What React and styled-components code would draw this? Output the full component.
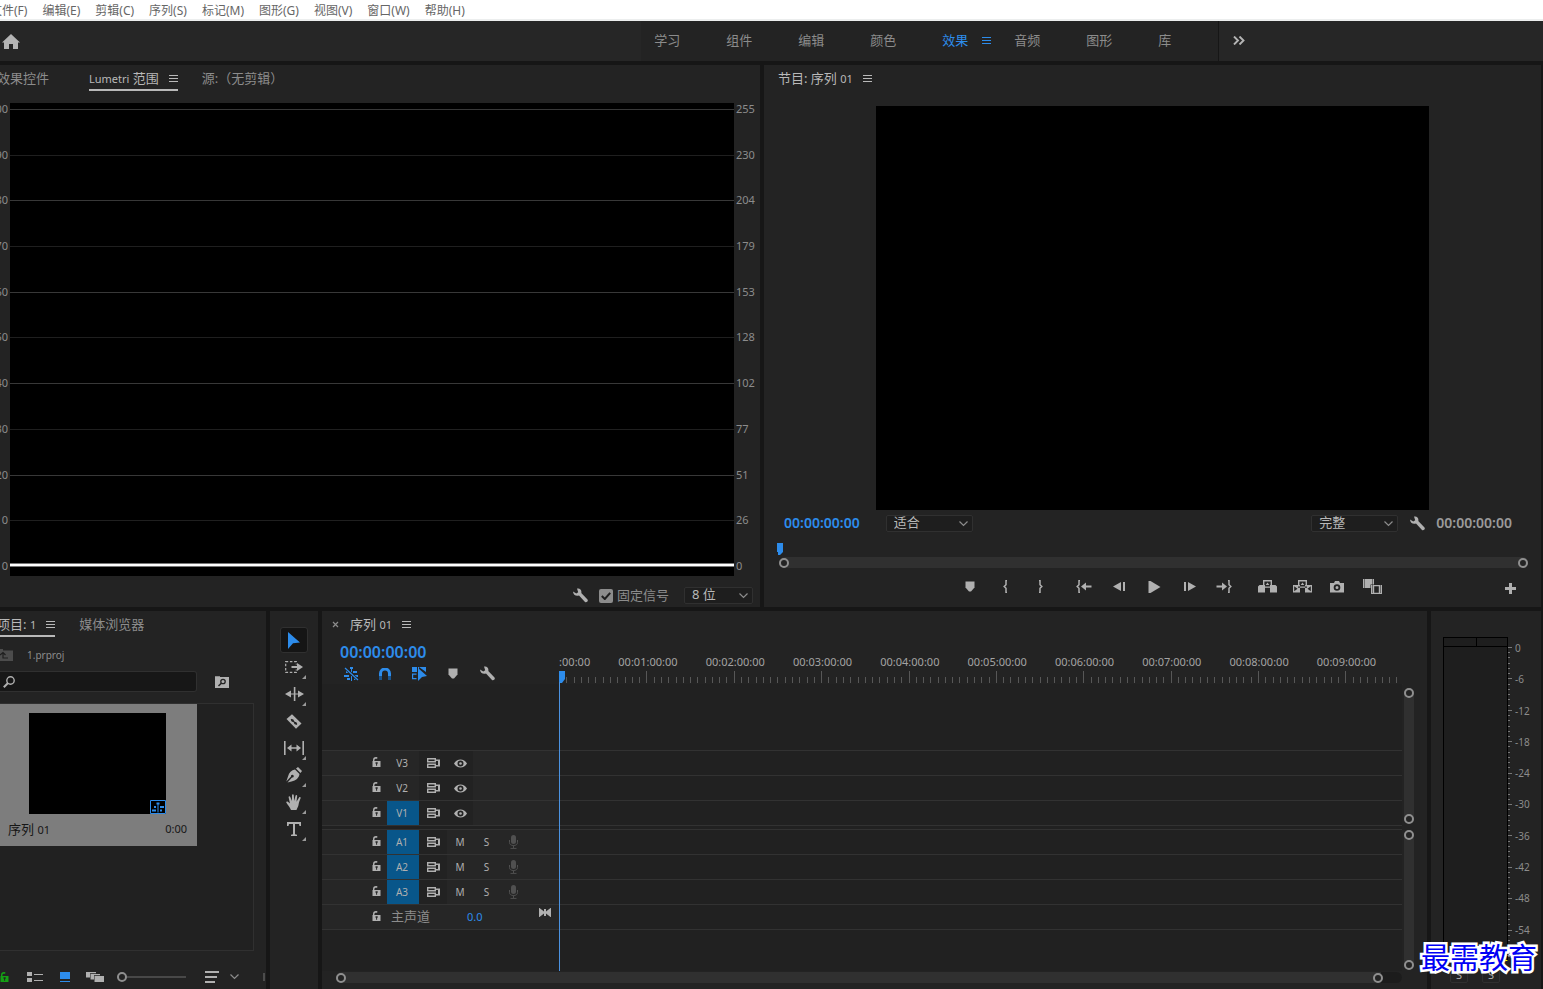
import React, { useState } from 'react'
import styled, { createGlobalStyle, css } from 'styled-components'

const GlobalStyle = createGlobalStyle`
    * {
        box-sizing: border-box;
    }
    body {
        margin: 0;
        background: #161616;
        color: #8c8c8c;
        font-family: 'Noto Sans', 'Noto Sans CJK SC', sans-serif;
        font-size: 13px;
        line-height: 16px;
    }
    button, input, select {
        font: inherit;
        color: inherit;
    }
    button {
        display: flex;
        align-items: center;
        justify-content: center;
        padding: 0;
        border: 0;
        background: none;
    }
    svg {
        display: block;
        flex: none;
    }
`

const Page = styled.div`
    display: flex;
    flex-direction: column;
    height: 100vh;
    overflow: hidden;
`

const MenuBar = styled.nav`
    display: flex;
    flex: none;
    gap: 15px;
    height: 21px;
    padding-top: 2px;
    margin-left: -10px;
    background: #fff;
    border-bottom: 2px solid #eceeee;
`

const MenuItem = styled.button`
    color: #666;
    font-size: 12px;
    white-space: nowrap;
`

const TopBar = styled.header`
    display: flex;
    flex: none;
    height: 40px;
    background: #262626;
`

const HomeArea = styled.div`
    display: flex;
    align-items: center;
    flex: 640;
    padding-left: 2px;
    color: #b4b4b4;
`

const Workspaces = styled.nav`
    display: flex;
    flex: none;
    padding: 0 0 2px 13px;
    background: #232323;
    border-right: 1px solid #161616;
`

const Workspace = styled.button`
    justify-content: flex-start;
    gap: 14px;
    width: 72px;
    color: ${p => (p.$active ? '#2d8ceb' : '#8c8c8c')};

    &:last-child {
        width: 60px;
    }
`

const MoreArea = styled.div`
    display: flex;
    flex: 310;
    padding: 0 0 2px 14px;
    color: #b4b4b4;
`

const Workbench = styled.main`
    display: flex;
    flex: 1;
    flex-direction: column;
    gap: 4px;
    min-height: 0;
    padding: 4px 2px 0 0;
`

const PanelRow = styled.div`
    display: flex;
    flex: ${p => p.$size} 1 0;
    gap: 4px;
    min-height: 0;
`

const Panel = styled.section`
    display: flex;
    flex-direction: column;
    flex: ${p => p.$flex || 'none'};
    width: ${p => p.$width || 'auto'};
    min-width: 0;
    min-height: 0;
    background: #232323;
    overflow: hidden;
`

const TabBar = styled.div`
    display: flex;
    align-items: flex-start;
    flex: none;
    gap: ${p => p.$gap || '23px'};
    height: ${p => p.$height};
    padding-left: ${p => p.$left || '0'};
    margin-left: ${p => p.$shift || '0'};
`

const Tab = styled.button`
    gap: ${p => p.$gap || '10px'};
    height: 26px;
    padding-top: ${p => (p.$active ? '3px' : '1px')};
    border-bottom: 2px solid ${p => (p.$underline ? '#b9b9b9' : 'transparent')};
    color: ${p => (p.$active ? '#b9b9b9' : '#8c8c8c')};
    white-space: nowrap;
`

const Latin = styled.span`
    font-size: 11px;
`

const Knob = styled.span`
    flex: none;
    width: 10px;
    height: 10px;
    border: 2px solid #8f8f8f;
    border-radius: 50%;
    background: #232323;
`

const SelectBox = styled.span`
    display: flex;
    position: relative;
    width: ${p => p.$width};
    color: #b9b9b9;

    select {
        appearance: none;
        width: 100%;
        height: 17px;
        padding: 0 0 2px 7px;
        border: 1px solid #303030;
        border-radius: 2px;
        background: #1e1e1e;
        line-height: 13px;
    }
    svg {
        position: absolute;
        right: 5px;
        top: 6px;
        pointer-events: none;
    }
`

const Timecode = styled.span`
    color: ${p => (p.$muted ? '#9a9a9a' : '#2d8ceb')};
    font-size: ${p => (p.$large ? '16px' : '14px')};
    font-weight: 600;
    line-height: 20px;
`

const WrenchButton = styled.button`
    margin: ${p => p.$margin || '0'};
    color: #b0b0b0;
`

// scopes

const Scope = styled.div`
    display: flex;
    flex: 1;
    min-height: 0;
`

const ScaleLabels = styled.div`
    display: flex;
    flex-direction: column;
    justify-content: space-between;
    align-items: ${p => (p.$left ? 'flex-end' : 'flex-start')};
    width: ${p => (p.$left ? '10px' : '26px')};
    padding: ${p => (p.$left ? '0 2px 4px 0' : '0 0 4px 2px')};
    font-size: 11px;
    line-height: 12px;
`

const Graph = styled.div`
    display: flex;
    flex: 1;
    flex-direction: column;
    justify-content: space-between;
    padding: 6px 0 9px;
    background: #000;
`

const GraphLine = styled.span`
    height: 1px;
    background: ${p => (p.$strong ? '#383838' : '#1f1f1f')};
    ${p => p.$trace && css`
        height: 4px;
        margin-top: -3px;
        background: #fff;
        border: solid #777;
        border-width: 1px 0;
    `}
`

const ScopeFooter = styled.div`
    display: flex;
    align-items: center;
    justify-content: flex-end;
    flex: none;
    height: 31px;
    padding: 8px 7px 0 0;
`

const CheckLabel = styled.label`
    display: flex;
    align-items: center;
    gap: 4px;
    margin: 0 15px 0 11px;

    input {
        appearance: none;
        width: 14px;
        height: 14px;
        margin: 0;
        border-radius: 2px;
        background: #8c8c8c;
    }
    svg {
        position: absolute;
        left: 2px;
        top: 3px;
        pointer-events: none;
    }
`

const CheckMark = styled.span`
    display: flex;
    position: relative;
`

const CheckText = styled.span`
    padding-bottom: 2px;
`

// program monitor

const Video = styled.div`
    flex: 1;
    margin: 0 112px;
    background: #000;
`

const MonitorInfo = styled.div`
    display: flex;
    align-items: center;
    gap: 26px;
    height: 26px;
    padding: 0 29px 0 20px;
`

const Grow = styled.span`
    flex: ${p => p.$size || 1} 1 0;
`

const Scrub = styled.div`
    padding: 7px 13px 0;
    color: #2d8ceb;
`

const ScrubTrack = styled.div`
    display: flex;
    align-items: center;
    justify-content: space-between;
    height: 11px;
    margin: 2px 0 0 2px;
    border-radius: 6px;
    background: #303030;
`

const Transport = styled.div`
    display: flex;
    align-items: center;
    height: 39px;
    padding-bottom: 2px;
`

const TransportGroup = styled.div`
    display: flex;
    margin-right: ${p => p.$gap || '0'};
    color: #b0b0b0;
`

const TransportButton = styled.button`
    width: 35px;
    height: 24px;
`

const AddArea = styled.div`
    display: flex;
    justify-content: flex-end;
    flex: 126 1 0;
    padding: 4px 25px 0 0;
    color: #b0b0b0;
`

// project

const PathRow = styled.div`
    display: flex;
    align-items: center;
    gap: 14px;
    height: 34px;
    padding-top: 2px;
    font-size: 10px;

    svg {
        color: #4c4c4c;
    }
`

const SearchRow = styled.div`
    display: flex;
    align-items: center;
    gap: 18px;
    color: #b0b0b0;
`

const SearchField = styled.label`
    display: flex;
    align-items: center;
    width: 197px;
    height: 21px;
    padding-left: 3px;
    border: 1px solid #303030;
    border-left: 0;
    border-radius: 0 3px 3px 0;
    background: #171717;

    input {
        flex: 1;
        min-width: 0;
        height: 16px;
        border: 0;
        background: none;
        outline: none;
    }
`

const Bin = styled.div`
    flex: 1;
    margin: 11px 12px 0 0;
    border: 1px solid #303030;
    border-left: 0;
    background: #212121;
`

const Clip = styled.article`
    width: 197px;
    padding: 9px 10px 8px 8px;
    background: #7d7d7d;
    color: #161616;
`

const Thumb = styled.div`
    display: flex;
    align-items: flex-end;
    justify-content: flex-end;
    height: 101px;
    margin: 0 21px 7px;
    background: #000;
    color: #2d8ceb;
`

const ClipInfo = styled.div`
    display: flex;
    justify-content: space-between;
`

const ProjectFooter = styled.div`
    display: flex;
    align-items: center;
    height: 38px;
    padding-top: 14px;
    color: #b0b0b0;
`

const FooterButton = styled.button`
    justify-content: ${p => p.$align || 'center'};
    width: ${p => p.$width};
    height: 16px;
    color: ${p => p.$color || '#b0b0b0'};
`

const FooterEdge = styled.span`
    width: 2px;
    height: 8px;
    margin-right: 1px;
    background: #4c4c4c;
`

const ZoomSlider = styled.input`
    appearance: none;
    width: 69px;
    height: 12px;
    margin: 0 16px 0 6px;
    background: linear-gradient(#484848, #484848) 0 5px / 100% 2px no-repeat;

    &::-webkit-slider-thumb {
        appearance: none;
        width: 10px;
        height: 10px;
        border: 2px solid #8f8f8f;
        border-radius: 50%;
        background: #232323;
    }
`

const Tools = styled.div`
    display: flex;
    flex-direction: column;
    align-items: center;
    gap: 1px;
    padding-top: 16px;
`

const Tool = styled.button`
    position: relative;
    width: 28px;
    height: 26px;
    border: 1px solid ${p => (p.$active ? '#303030' : 'transparent')};
    border-radius: 3px;
    background: ${p => (p.$active ? '#151515' : 'none')};
    color: ${p => (p.$active ? '#2d8ceb' : '#b0b0b0')};

    ${p => p.$more && css`
        &::after {
            content: '';
            position: absolute;
            right: 1px;
            bottom: 0;
            border: 2px solid transparent;
            border-right-color: #9a9a9a;
            border-bottom-color: #9a9a9a;
        }
    `}
`

// timeline

const TimelineHead = styled.div`
    display: grid;
    grid-template-columns: 237px 1fr;
    flex: none;
    height: 47px;
    padding-right: 24px;
`

const HeadControls = styled.div`
    padding: 5px 0 0 18px;
`

const HeadIcons = styled.div`
    display: flex;
    gap: 10px;
    margin-left: -1px;
`

const HeadButton = styled.button`
    width: 24px;
    height: 23px;
    color: ${p => (p.$on ? '#2d8ceb' : '#b0b0b0')};
`

const Ruler = styled.div`
    position: relative;
    display: flex;
    flex-direction: column;
    justify-content: flex-end;
    min-width: 0;
    overflow: hidden;
`

const RulerLabels = styled.div`
    display: flex;
    color: #a3a3a3;
    font-size: 11px;

    span {
        flex: 12 1 0;
        min-width: 0;
        text-indent: -28px;
        white-space: nowrap;
    }
    span:last-child {
        flex-grow: 8;
    }
`

const Ticks = styled.div`
    display: flex;
    align-items: flex-end;
    height: 15px;
    padding-bottom: 1px;
    border-bottom: 1px solid #262626;
`

const Tick = styled.span`
    flex: 1;
    height: ${p => (p.$major ? '12px' : '6px')};
    border-left: 1px solid #575757;
`

const PlayheadHandle = styled.svg`
    position: absolute;
    left: 0;
    bottom: 2px;
`

const TimelineBody = styled.div`
    display: flex;
    flex: 1;
    min-height: 0;
`

const TrackArea = styled.div`
    position: relative;
    display: flex;
    flex: 1;
    flex-direction: column;
    background: #212121;
`

const Playhead = styled.span`
    position: absolute;
    left: 237px;
    top: -2px;
    bottom: 0;
    width: 1px;
    background: #4b92e0;
`

const VideoTracks = styled.div`
    display: flex;
    flex: 1;
    flex-direction: column;
    justify-content: flex-end;
`

const TrackGap = styled.div`
    height: ${p => p.$height};
    border-top: 1px solid #323232;
`

const Track = styled.div`
    display: flex;
    height: 25px;
    border-top: 1px solid #323232;
`

const TrackHeader = styled.div`
    display: grid;
    grid-template-columns: 65px 32px 28px 26px 27px 27px 32px;
    width: 237px;
    background: #262626;
    color: #b0b0b0;
    font-size: 10px;
`

const TrackButton = styled.button`
    background: ${p => (p.$target ? '#08568a' : p.$dark ? '#222' : 'none')};
    ${p => p.$name && css`
        padding-right: 2px;
    `}
    ${p => p.$lock && css`
        justify-content: flex-end;
        padding: 0 6px 2px 0;
    `}
    ${p => p.$dim && css`
        color: #505050;
    `}
`

const MasterName = styled.span`
    grid-column: 2 / 4;
    padding: 3px 0 0 4px;
    color: #8c8c8c;
    font-size: 13px;
`

const MasterLevel = styled.span`
    grid-column: 4 / 6;
    padding: 4px 0 0 20px;
    color: #2d8ceb;
    font-size: 11px;
`

const MasterFit = styled.button`
    grid-column: 7;
    align-items: flex-start;
    justify-content: flex-start;
    padding: 3px 0 0 12px;
`

const ScrollColumn = styled.div`
    display: flex;
    flex-direction: column;
    gap: 6px;
    width: 25px;
    padding: 4px 13px 1px 2px;
`

const VerticalBar = styled.div`
    display: flex;
    flex-direction: column;
    justify-content: space-between;
    flex: ${p => p.$size} 1 0;
    border-radius: 5px;
    background: #303030;
`

const HorizontalBar = styled.div`
    display: flex;
    flex: none;
    align-items: center;
    justify-content: space-between;
    height: 11px;
    padding-right: 19px;
    margin: 1px 25px 6px 14px;
    border-radius: 6px;
    background: linear-gradient(90deg, #303030 0 98%, #1c1c1c 98%);
`

// audio meters

const Meter = styled.div`
    display: flex;
    flex: 1;
    min-height: 0;
    padding-left: 12px;
`

const MeterBox = styled.div`
    width: 65px;
    border: 1px solid #000;
    border-bottom-color: #ff0;
    background: #1e1e1e;
`

const MeterPeaks = styled.div`
    display: grid;
    grid-template-columns: 1fr 1fr;
    height: 9px;
    border-bottom: 1px solid #000;

    span + span {
        border-left: 1px solid #000;
    }
`

const MeterTicks = styled.div`
    display: flex;
    flex-direction: column;
    width: 4px;
    padding-top: 10px;

    span {
        flex: 1;
        width: 2px;
        border-top: 1px solid #777;
    }
    span:nth-child(6n + 1) {
        width: 4px;
    }
`

const MeterLabels = styled.div`
    display: flex;
    flex-direction: column;
    padding: 3px 0 8px 3px;
    font-size: 10px;

    span {
        flex: 1;
    }
`

const SoloRow = styled.div`
    display: flex;
    gap: 14px;
    height: 28px;
    padding: 4px 0 6px 19px;

    button {
        width: 18px;
        padding-top: 2px;
        border: 1px solid #303030;
        border-radius: 2px;
        color: #b0b0b0;
        font-size: 11px;
    }
`

const Watermark = styled.div`
    position: absolute;
    right: 6px;
    bottom: 15px;
    color: #0000f4;
    font-family: 'AR PL UKai CN', 'KaiTi', 'Noto Sans CJK SC', sans-serif;
    font-size: 29px;
    line-height: 36px;
    -webkit-text-stroke: 5px #fff;
    paint-order: stroke fill;
    pointer-events: none;
`

const Icon = ({ w, h, children }) => (
    <svg width={w} height={h} viewBox={`0 0 ${w} ${h}`} fill="currentColor" aria-hidden="true">
        {children}
    </svg>
)

const Burger = () => (
    <Icon w={9} h={9}>
        <path d="M0 1h9v1H0zM0 4h9v1H0zM0 7h9v1H0z" />
    </Icon>
)

const Chevron = () => (
    <Icon w={9} h={6}>
        <path d="M.5 .5l4 4 4-4" fill="none" stroke="#8c8c8c" strokeWidth="1.2" />
    </Icon>
)

const Wrench = () => (
    <Icon w={15} h={15}>
        <path d="M0 3.4l3.3 2.1 1.9-1.3L4 .6C6.6-.3 9 1.900 8.300 5L14.500 11.600c.6.8.3 1.700-.4 2.200-.6.600-1.500.700-2.100.1L6 7.500C3 8.500.1 6.800 0 3.400z" />
    </Icon>
)

const MarkerIcon = () => (
    <Icon w={10} h={11}>
        <path d="M.5.5h9v6L6 10.500H4L.5 6.500z" />
    </Icon>
)

const LockIcon = () => (
    <Icon w={9} h={10}>
        <path d="M1.700 4.500V3.200C1.700 1.700 2.500.800 4 .8l1.300.2" fill="none" stroke="currentColor" strokeWidth="1.400" />
        <path fillRule="evenodd" d="M.5 4h8v6h-8zM3.500 5.300v1.500h.6V8.700h1V6.800h.6V5.300z" />
    </Icon>
)

const SyncIcon = () => (
    <Icon w={13} h={10}>
        <path d="M.7.700h7.600v3H.7zM.7 6.300h7.600v3H.7z" fill="none" stroke="currentColor" strokeWidth="1.400" />
        <path d="M8 1.500h5v7H8V7h3V3H8z" />
    </Icon>
)

const EyeIcon = () => (
    <Icon w={13} h={9}>
        <path fillRule="evenodd" d="M0 4.500C3-.8 10-.8 13 4.500 10 9.800 3 9.800 0 4.500zM6.500 1.500a3 3 0 100 6 3 3 0 000-6z" />
        <circle cx="6.500" cy="4.500" r="1.300" />
    </Icon>
)

const MicIcon = () => (
    <Icon w={9} h={14}>
        <rect x="2" y="0" width="5" height="9" rx="2.500" />
        <path d="M.5 5v2.500c0 2 1.500 3 4 3s4-1 4-3V5M4.500 10.500V13M1.500 13.400h6" fill="none" stroke="currentColor" />
    </Icon>
)

const braceLeft = 'M4 .5H3v4.300L1.200 6.500 3 8.200v4.300h1'

const transportGroups = [
    {
        gap: '9px',
        items: [
            ['添加标记', <MarkerIcon />],
            ['标记入点', <Icon w={5} h={13}><path d={braceLeft} fill="none" stroke="currentColor" strokeWidth="1.500" /></Icon>],
            ['标记出点', <Icon w={5} h={13}><path d="M1 .5h1v4.300l1.800 1.700L2 8.200v4.300H1" fill="none" stroke="currentColor" strokeWidth="1.500" /></Icon>],
        ],
    },
    {
        gap: '8px',
        items: [
            ['转到入点', (
                <Icon w={16} h={13}>
                    <path d={braceLeft} fill="none" stroke="currentColor" strokeWidth="1.500" />
                    <path d="M5 6.500l5-4v3h5.500v2H10v3z" />
                </Icon>
            )],
            ['后退一帧', <Icon w={13} h={9}><path d="M0 4.500L8 0v9zM10 0h2v9h-2z" /></Icon>],
            ['播放', <Icon w={13} h={12}><path d="M.5 0h2L12.500 6l-10 6h-2z" /></Icon>],
            ['前进一帧', <Icon w={13} h={9}><path d="M13 4.500L5 0v9zM1 0h2v9H1z" /></Icon>],
            ['转到出点', (
                <Icon w={16} h={13}>
                    <path d="M12 .5h1v4.300l1.800 1.700L13 8.200v4.300h-1" fill="none" stroke="currentColor" strokeWidth="1.500" />
                    <path d="M11 6.500l-5-4v3H.5v2H6v3z" />
                </Icon>
            )],
        ],
    },
    {
        gap: '0',
        items: [
            ['提升', (
                <Icon w={19} h={13}>
                    <path d="M5.700 5.500V.700h7.600v4.800" fill="none" stroke="currentColor" strokeWidth="1.400" />
                    <path d="M0 6.500L1.500 5H7v7.500H0zM12 5h5.500L19 6.500v6h-7zM5 6.500h9v1.200H5zM9.500 2.500l1.800 2.500H7.700z" />
                </Icon>
            )],
            ['提取', (
                <Icon w={19} h={13}>
                    <path d="M5.700 5.500V.700h7.600v4.800" fill="none" stroke="currentColor" strokeWidth="1.400" />
                    <path fillRule="evenodd" d="M0 5h7v7.500H0zM1.200 6.200v5L4.500 8.700zM12 5h7v7.500h-7zM17.800 6.200v5l-3.300-2.500zM5 6.500h9v1.200H5zM9.500 2.500l1.800 2.500H7.700z" />
                </Icon>
            )],
            ['导出帧', (
                <Icon w={14} h={12}>
                    <path fillRule="evenodd" d="M0 2h4l1-2h4l1 2h4v9.500H0zM7 3.200a3.300 3.300 0 100 6.600 3.300 3.300 0 000-6.600zM7 5a1.500 1.500 0 110 3 1.500 1.500 0 010-3z" />
                </Icon>
            )],
            ['比较视图', (
                <Icon w={19} h={15}>
                    <path d="M0 0h11v9H0z" />
                    <path d="M1.500.5v9M9.500.5v9" stroke="#232323" strokeDasharray="1 1" />
                    <path d="M7.500 5.500H19V15H7.500z" fill="#232323" />
                    <path d="M8 6h4v1.200h-.8v6.600h.8V15H8zM15 6h4v9h-4v-1.200h.8V7.200H15zM11 6h5v1.200h-5zM11 13.800h5V15h-5z" />
                    <path d="M9.500 6.500v8M17.500 6.500v8" stroke="#232323" strokeDasharray="1 1" />
                </Icon>
            )],
        ],
    },
]

const tools = [
    ['选择工具', false, <Icon w={12} h={17}><path d="M0 0l12 10.500-7 .7L0 17z" /></Icon>],
    ['向前选择轨道工具', true, (
        <Icon w={18} h={12}>
            <path d="M.7.700h10.600v10.600H.700z" fill="none" stroke="currentColor" strokeWidth="1.200" strokeDasharray="2.500 1.700" />
            <path d="M6 3.500h12v5H6z" fill="#232323" />
            <path d="M6.500 5H12V2l6 4-6 4V7H6.500z" />
        </Icon>
    )],
    ['波纹编辑工具', true, <Icon w={19} h={14}><path d="M8.800 0h1.600v14H8.800zM0 7l6-3.500v3h7v-3L19 7l-6 3.500v-3H6v3z" /></Icon>],
    ['剃刀工具', false, (
        <Icon w={16} h={15}>
            <path d="M.5 5L6 .3 15.500 9.500 10 14.700z" />
            <path d="M5 5.200l6 5.300" stroke="#232323" strokeWidth="1.200" />
            <circle cx="6.500" cy="6.500" r="1.200" fill="#232323" />
            <circle cx="9.500" cy="9.200" r="1.200" fill="#232323" />
        </Icon>
    )],
    ['外滑工具', true, <Icon w={20} h={14}><path d="M0 0h1.600v14H0zM18.400 0H20v14h-1.600zM3 7l4.500-3.500v2.800h5V3.500L17 7l-4.500 3.500V7.700h-5v2.800z" /></Icon>],
    ['钢笔工具', true, (
        <Icon w={16} h={16}>
            <path d="M10 1.500L12 0l4 4-1.500 2zM9 2.500L13.500 7c-.5 4-3.500 6.500-8 7.500L1.500 15.500 6 10.500a1.400 1.400 0 10-1-1L.3 14.500 2 9.500C3 5.500 5.500 3 9 2.500z" />
        </Icon>
    )],
    ['手形工具', true, (
        <Icon w={16} h={16}>
            <path d="M5 16C4 13 1.500 11 .3 8.500c-.4-1 .8-1.500 1.600-.7L4 9.600 2.600 3.300c-.2-1.200 1.300-1.600 1.700-.4L5.900 7 6 1.300C6 0 7.700 0 7.800 1.300L8.200 7l1.300-5.300c.3-1.200 1.900-.9 1.700.4l-.7 5.600 2.600-4.200c.6-1 2-.3 1.500.8-1.300 3-1.600 4-2 6.200-.3 2-1.300 3.500-2.100 5.500z" />
        </Icon>
    )],
    ['文字工具', true, <Icon w={14} h={14}><path d="M0 0h14v4h-1.500L12 2H8v10.300l2 .4V14H4v-1.300l2-.4V2H2l-.5 2H0z" /></Icon>],
]

const menus = ['文件(F)', '编辑(E)', '剪辑(C)', '序列(S)', '标记(M)', '图形(G)', '视图(V)', '窗口(W)', '帮助(H)']
const workspaces = ['学习', '组件', '编辑', '颜色', '效果', '音频', '图形', '库']
const percentScale = [100, 90, 80, 70, 60, 50, 40, 30, 20, 10, 0]
const levelScale = [255, 230, 204, 179, 153, 128, 102, 77, 51, 26, 0]
const minutes = [0, 1, 2, 3, 4, 5, 6, 7, 8, 9]
const meterScale = [0, -6, -12, -18, -24, -30, -36, -42, -48, -54]

const ScopePanel = () => {
    const [clamp, setClamp] = useState(true)
    return (
        <Panel $flex="760 1 0">
            <TabBar $height="38px" $shift="-3px" $gap="0">
                <Tab>效果控件</Tab>
                <Grow $size={40} style={{ maxWidth: 40 }} />
                <Tab $active $underline $gap="10px">
                    <span><Latin>Lumetri</Latin> 范围</span>
                    <Burger />
                </Tab>
                <Grow $size={24} style={{ maxWidth: 24 }} />
                <Tab>源:（无剪辑）</Tab>
            </TabBar>
            <Scope>
                <ScaleLabels $left>{percentScale.map(n => <span key={n}>{n}</span>)}</ScaleLabels>
                <Graph>
                    {levelScale.map((n, i) => <GraphLine key={n} $strong={i % 2 === 0} $trace={n === 0} />)}
                </Graph>
                <ScaleLabels>{levelScale.map(n => <span key={n}>{n}</span>)}</ScaleLabels>
            </Scope>
            <ScopeFooter>
                <WrenchButton aria-label="设置"><Wrench /></WrenchButton>
                <CheckLabel>
                    <CheckMark>
                        <input type="checkbox" checked={clamp} onChange={e => setClamp(e.target.checked)} />
                        {clamp && (
                            <Icon w={10} h={8}>
                                <path d="M.8 4l3 3L9.200.800" fill="none" stroke="#1e1e1e" strokeWidth="2" />
                            </Icon>
                        )}
                    </CheckMark>
                    <CheckText>固定信号</CheckText>
                </CheckLabel>
                <SelectBox $width="69px">
                    <select aria-label="位深度"><option>8 位</option></select>
                    <Chevron />
                </SelectBox>
            </ScopeFooter>
        </Panel>
    )
}

const ProgramPanel = () => (
    <Panel $flex="777 1 0">
        <TabBar $height="41px" $left="14px">
            <Tab $active>
                <span>节目: 序列 <Latin>01</Latin></span>
                <Burger />
            </Tab>
        </TabBar>
        <Video />
        <MonitorInfo>
            <Timecode>00:00:00:00</Timecode>
            <SelectBox $width="87px">
                <select aria-label="缩放级别"><option>适合</option></select>
                <Chevron />
            </SelectBox>
            <Grow />
            <SelectBox $width="87px">
                <select aria-label="回放分辨率"><option>完整</option></select>
                <Chevron />
            </SelectBox>
            <WrenchButton aria-label="设置" $margin="0 -15px 0 -14px"><Wrench /></WrenchButton>
            <Timecode $muted>00:00:00:00</Timecode>
        </MonitorInfo>
        <Scrub>
            <Icon w={6} h={12}><path d="M0 0h6v9l-3 3H1V9H0z" /></Icon>
            <ScrubTrack><Knob /><Knob /></ScrubTrack>
        </Scrub>
        <Transport>
            <Grow $size={188} />
            {transportGroups.map((group, i) => (
                <TransportGroup key={i} $gap={group.gap}>
                    {group.items.map(([name, icon]) => (
                        <TransportButton key={name} aria-label={name}>{icon}</TransportButton>
                    ))}
                </TransportGroup>
            ))}
            <AddArea>
                <button aria-label="按钮编辑器">
                    <Icon w={11} h={11}><path d="M4 0h3v4h4v3H7v4H4V7H0V4h4z" /></Icon>
                </button>
            </AddArea>
        </Transport>
    </Panel>
)

const ProjectPanel = () => {
    const [zoom, setZoom] = useState(0)
    return (
        <Panel $width="266px">
            <TabBar $height="26px" $shift="-3px" $gap="24px">
                <Tab $active $underline>
                    <span>项目: <Latin>1</Latin></span>
                    <Burger />
                </Tab>
                <Tab>媒体浏览器</Tab>
            </TabBar>
            <PathRow>
                <Icon w={13} h={12}>
                    <path d="M0 0h3v1.500h10V12H0z" />
                    <path d="M0 6l3-2.500L5.500 6M3 4v5h5" fill="none" stroke="#1e1e1e" strokeWidth="1.200" />
                </Icon>
                <span>1.prproj</span>
            </PathRow>
            <SearchRow>
                <SearchField>
                    <Icon w={12} h={12}>
                        <circle cx="7.500" cy="4.500" r="3.700" fill="none" stroke="currentColor" strokeWidth="1.400" />
                        <path d="M5 7L.800 11.200" stroke="currentColor" strokeWidth="2" />
                    </Icon>
                    <input type="text" aria-label="搜索" />
                </SearchField>
                <button aria-label="从查询创建新的搜索素材箱">
                    <Icon w={14} h={12}>
                        <path d="M0 0h5v.7H0zM0 1h14v11H0z" />
                        <circle cx="8" cy="5.500" r="2.200" fill="none" stroke="#232323" strokeWidth="1.300" />
                        <path d="M6.300 7.200L3.500 10" stroke="#232323" strokeWidth="1.500" />
                    </Icon>
                </button>
            </SearchRow>
            <Bin>
                <Clip>
                    <Thumb>
                        <Icon w={16} h={14}>
                            <path d="M.5.500h15v13H.500z" fill="none" stroke="currentColor" />
                            <path d="M6.500 2.500h3v2h-1v8h-1v-8h-1zM4 6h2v2H4zM10 6h4v2h-4zM2 9.500h4v2H2zM10 9.500h2v2h-2z" />
                        </Icon>
                    </Thumb>
                    <ClipInfo>
                        <span>序列 <Latin>01</Latin></span>
                        <Latin>0:00</Latin>
                    </ClipInfo>
                </Clip>
            </Bin>
            <ProjectFooter>
                <FooterButton aria-label="项目可写" $width="18px" $color="#15a015" $align="flex-start"><LockIcon /></FooterButton>
                <FooterButton aria-label="列表视图" $width="34px">
                    <Icon w={16} h={10}><path d="M0 0h5v4H0zM0 6h5v4H0zM7 2h9v1H7zM7 8h9v1H7z" /></Icon>
                </FooterButton>
                <FooterButton aria-label="图标视图" $width="26px" $color="#2d8ceb">
                    <Icon w={10} h={10}><path d="M0 0h10v7H0zM0 9h10v1H0z" /></Icon>
                </FooterButton>
                <FooterButton aria-label="自由变换视图" $width="33px">
                    <Icon w={18} h={10}><path d="M0 0h10v1.200H4V5.500H0zM4.500 2H14v1.200H8V7.500H4.500zM8.500 4H18v6H8.500z" /></Icon>
                </FooterButton>
                <ZoomSlider
                    type="range"
                    aria-label="缩放"
                    value={zoom}
                    onChange={e => setZoom(Number(e.target.value))}
                />
                <FooterButton aria-label="排序图标" $width="20px">
                    <Icon w={14} h={12}><path d="M0 0h14v2H0zM0 5h12v2H0zM0 10h10v2H0z" /></Icon>
                </FooterButton>
                <FooterButton aria-label="排序选项" $width="25px"><Chevron /></FooterButton>
                <Grow />
                <FooterEdge />
            </ProjectFooter>
        </Panel>
    )
}

const TrackRow = ({ name, target, audio }) => (
    <Track>
        <TrackHeader>
            <TrackButton $lock aria-label="切换轨道锁定"><LockIcon /></TrackButton>
            <TrackButton $name $target={target}>{name}</TrackButton>
            <TrackButton $dark aria-label="切换同步锁定"><SyncIcon /></TrackButton>
            {audio ? (
                <>
                    <TrackButton>M</TrackButton>
                    <TrackButton>S</TrackButton>
                    <TrackButton $dim aria-label="画外音录制"><MicIcon /></TrackButton>
                </>
            ) : (
                <TrackButton $dark aria-label="切换轨道输出"><EyeIcon /></TrackButton>
            )}
        </TrackHeader>
    </Track>
)

const TimelinePanel = () => (
    <Panel $flex="1 1 0">
        <TabBar $height="26px" $left="10px" $gap="11px">
            <Tab $active aria-label="关闭">
                <Icon w={7} h={7}>
                    <path d="M1 1l5 5M6 1L1 6" stroke="#8c8c8c" strokeWidth="1.200" />
                </Icon>
            </Tab>
            <Tab $active>
                <span>序列 <Latin>01</Latin></span>
                <Burger />
            </Tab>
        </TabBar>
        <TimelineHead>
            <HeadControls>
                <Timecode $large>00:00:00:00</Timecode>
                <HeadIcons>
                    <HeadButton $on aria-label="将序列作为嵌套或个别剪辑插入并覆盖">
                        <Icon w={15} h={14}>
                            <path d="M6 0h3v2H6zM7 2h1v4H7zM7 9h1v5H7zM2 4h3v2H2zM9 4h4v2H9zM0 8h5v2H0zM9 8h5v2H9zM3 11h3v2H3zM10 11h2v2h-2z" />
                            <path d="M1 1l13 12" stroke="#232323" strokeWidth="3" />
                            <path d="M1 1l13 12" stroke="currentColor" strokeWidth="1.200" />
                        </Icon>
                    </HeadButton>
                    <HeadButton $on aria-label="对齐">
                        <Icon w={12} h={12}>
                            <path d="M1.500 9V5.500a4.500 4.500 0 019 0V9" fill="none" stroke="currentColor" strokeWidth="3" />
                            <path d="M0 8h3v4H0zM9 8h3v4H9z" fill="#1b548c" />
                        </Icon>
                    </HeadButton>
                    <HeadButton $on aria-label="链接选择项">
                        <Icon w={15} h={14}>
                            <path d="M0 0h5v5H0zM6 0h8v5L7 0v5H6zM0 6.500h4.500v1.200H1.200V11h3.300v1.200H0z" />
                            <path d="M6 1l9 8-5 1-4 4z" />
                        </Icon>
                    </HeadButton>
                    <HeadButton aria-label="添加标记"><MarkerIcon /></HeadButton>
                    <HeadButton aria-label="时间轴显示设置"><Wrench /></HeadButton>
                </HeadIcons>
            </HeadControls>
            <Ruler>
                <RulerLabels>{minutes.map(m => <span key={m}>{`00:0${m}:00:00`}</span>)}</RulerLabels>
                <Ticks>
                    {Array.from({ length: 116 }, (_, i) => <Tick key={i} $major={i % 12 === 0} />)}
                </Ticks>
                <PlayheadHandle width="6" height="12" viewBox="0 0 6 12" fill="#2d8ceb">
                    <path d="M0 0h6v8l-3 4H0z" />
                </PlayheadHandle>
            </Ruler>
        </TimelineHead>
        <TimelineBody>
            <TrackArea>
                <VideoTracks>
                    <TrackRow name="V3" />
                    <TrackRow name="V2" />
                    <TrackRow name="V1" target />
                    <TrackGap $height="4px" />
                </VideoTracks>
                <TrackRow name="A1" target audio />
                <TrackRow name="A2" target audio />
                <TrackRow name="A3" target audio />
                <Track>
                    <TrackHeader>
                        <TrackButton $lock aria-label="切换轨道锁定"><LockIcon /></TrackButton>
                        <MasterName>主声道</MasterName>
                        <MasterLevel>0.0</MasterLevel>
                        <MasterFit aria-label="显示关键帧">
                            <Icon w={12} h={9}><path d="M0 0h.5L5 3.500V1h2v2.500L11.500 0h.5v9h-.5L7 5.500V8H5V5.500L.5 9H0z" /></Icon>
                        </MasterFit>
                    </TrackHeader>
                </Track>
                <TrackGap $height="42px" />
                <Playhead />
            </TrackArea>
            <ScrollColumn>
                <VerticalBar $size={136}><Knob /><Knob /></VerticalBar>
                <VerticalBar $size={140}><Knob /><Knob /></VerticalBar>
            </ScrollColumn>
        </TimelineBody>
        <HorizontalBar><Knob /><Knob /></HorizontalBar>
    </Panel>
)

const MeterPanel = () => (
    <Panel $width="110px">
        <TabBar $height="26px" />
        <Meter>
            <MeterBox>
                <MeterPeaks><span /><span /></MeterPeaks>
            </MeterBox>
            <MeterTicks>{Array.from({ length: 60 }, (_, i) => <span key={i} />)}</MeterTicks>
            <MeterLabels>{meterScale.map(n => <span key={n}>{n}</span>)}</MeterLabels>
        </Meter>
        <SoloRow>
            <button>S</button>
            <button>S</button>
        </SoloRow>
    </Panel>
)

export default function App() {
    const [workspace, setWorkspace] = useState('效果')
    return (
        <Page>
            <GlobalStyle />
            <MenuBar>
                {menus.map(name => <MenuItem key={name}>{name}</MenuItem>)}
            </MenuBar>
            <TopBar>
                <HomeArea>
                    <button aria-label="主页">
                        <Icon w={18} h={15}><path d="M9 0l9 8.500h-2V15h-5v-5H7v5H2V8.500H0z" /></Icon>
                    </button>
                </HomeArea>
                <Workspaces>
                    {workspaces.map(name => (
                        <Workspace key={name} $active={name === workspace} onClick={() => setWorkspace(name)}>
                            {name}
                            {name === workspace && <Burger />}
                        </Workspace>
                    ))}
                </Workspaces>
                <MoreArea>
                    <button aria-label="更多工作区">
                        <Icon w={12} h={9}>
                            <path d="M1 .5l4 4-4 4M6.500.500l4 4-4 4" fill="none" stroke="currentColor" strokeWidth="1.900" />
                        </Icon>
                    </button>
                </MoreArea>
            </TopBar>
            <Workbench>
                <PanelRow $size={542}>
                    <ScopePanel />
                    <ProgramPanel />
                </PanelRow>
                <PanelRow $size={378}>
                    <ProjectPanel />
                    <Panel $width="48px">
                        <Tools>
                            {tools.map(([name, more, icon], i) => (
                                <Tool key={name} aria-label={name} $active={i === 0} $more={more}>{icon}</Tool>
                            ))}
                        </Tools>
                    </Panel>
                    <TimelinePanel />
                    <MeterPanel />
                </PanelRow>
            </Workbench>
            <Watermark>最需教育</Watermark>
        </Page>
    )
}
